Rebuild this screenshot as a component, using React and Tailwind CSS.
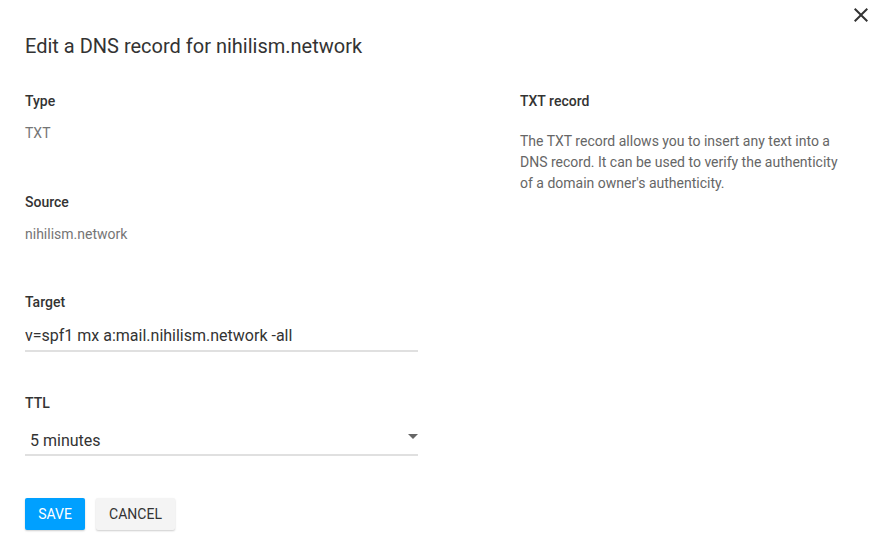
import { useState } from 'react';

const Field = ({ label, children, className = '' }) => (
  <div className={className}>
    <p className="text-[14px] leading-[20px] font-medium text-[#333]">{label}</p>
    {children}
  </div>
);

const App = () => {
  const [target, setTarget] = useState('v=spf1 mx a:mail.nihilism.network -all');
  const [ttl, setTtl] = useState('300');

  return (
    <div className="relative w-[880px] h-[552px] bg-white font-['Roboto',sans-serif] text-[#333]">
      {/* Close */}
      <button className="absolute right-[7px] top-[3px] w-6 h-6 text-[#333]" title="Close">
        <svg viewBox="0 0 24 24" width="24" height="24" fill="currentColor">
          <path d="M19 6.41L17.59 5 12 10.59 6.41 5 5 6.41 10.59 12 5 17.59 6.41 19 12 13.41 17.59 19 19 17.59 13.41 12z" />
        </svg>
      </button>

      <div className="pl-[25px] pt-[34px]">
        <h1 className="text-[20px] leading-[24px] font-normal text-[#333]">
          Edit a DNS record for nihilism.network
        </h1>

        <div className="flex gap-[102px] mt-[33px]">
          {/* Left column */}
          <div className="w-[393px]">
            <Field label="Type">
              <p className="mt-[12px] text-[14px] leading-[20px] text-[#757575]">TXT</p>
            </Field>

            <Field label="Source" className="mt-[49px]">
              <p className="mt-[12px] text-[14px] leading-[20px] text-[#757575]">nihilism.network</p>
            </Field>

            <Field label="Target" className="mt-[48px]">
              <input
                type="text"
                value={target}
                onChange={(e) => setTarget(e.target.value)}
                className="mt-[10px] w-full h-[30px] text-[16px] text-[#333] border-b-2 border-[#e0e0e0] outline-none bg-transparent pb-[2px]"
              />
            </Field>

            <Field label="TTL" className="mt-[41px]">
              <div className="relative mt-[16px]">
                <select
                  value={ttl}
                  onChange={(e) => setTtl(e.target.value)}
                  className="appearance-none w-full h-[27px] pl-[5px] pb-[3px] text-[16px] text-[#333] border-b-2 border-[#e0e0e0] outline-none bg-transparent"
                >
                  <option value="300">5 minutes</option>
                  <option value="3600">1 hour</option>
                  <option value="86400">1 day</option>
                </select>
                <svg
                  className="absolute right-0 top-[5px] pointer-events-none"
                  width="10" height="5" viewBox="0 0 10 5" fill="#666"
                >
                  <path d="M0 0l5 5 5-5z" />
                </svg>
              </div>
            </Field>

            <div className="flex gap-[11px] mt-[42px]">
              <button className="w-[60px] h-[32px] rounded-[2px] bg-[#00a0ff] text-white text-[14px] uppercase shadow-[0_1px_2px_rgba(0,0,0,0.2)]">
                Save
              </button>
              <button className="w-[79px] h-[32px] rounded-[2px] bg-[#f4f4f4] text-[#333] text-[14px] uppercase shadow-[0_1px_2px_rgba(0,0,0,0.2)]">
                Cancel
              </button>
            </div>
          </div>

          {/* Right column */}
          <div className="w-[325px]">
            <p className="text-[14px] leading-[20px] font-medium text-[#333]">TXT record</p>
            <p className="mt-[20px] text-[14px] leading-[21px] text-[#666]">
              The TXT record allows you to insert any text into a DNS record. It can be used to verify the
              authenticity of a domain owner's authenticity.
            </p>
          </div>
        </div>
      </div>
    </div>
  );
};

export default App;
